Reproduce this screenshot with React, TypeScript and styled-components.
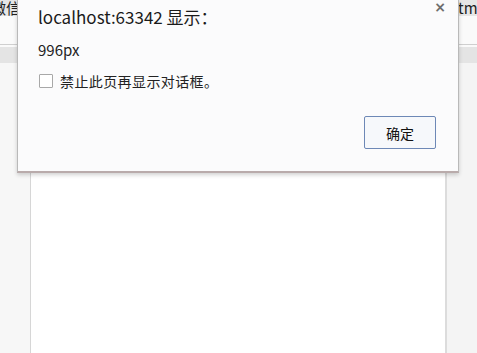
import React from "react";
import styled, { createGlobalStyle } from "styled-components";

const Global = createGlobalStyle`
  html, body { margin: 0; padding: 0; background: #f7f7f7; }
  body { font-family: "Noto Sans CJK SC", "Noto Sans", sans-serif; }
  #root { width: 477px; height: 353px; }
`;

const Page = styled.div`
  position: relative;
  width: 477px;
  height: 353px;
  overflow: hidden;
  display: flex;
  flex-direction: column;
  background: #f7f7f7;
`;

const TabBar = styled.div`
  height: 16px;
  display: flex;
  justify-content: space-between;
  align-items: center;
  background: #e6e6e6;
  font-size: 15px;
  color: #222;
  overflow: hidden;
`;

const TabText = styled.span<{ $shift: number }>`
  margin-left: ${(p) => p.$shift}px;
  line-height: 16px;
  white-space: nowrap;
`;

const WhiteRow = styled.div`
  height: 28px;
  background: #fafafa;
  border-bottom: 1px solid #cfcfcf;
`;

const Gap = styled.div`
  height: 2px;
  background: #fafafa;
`;

const GrayBand = styled.div`
  height: 16px;
  background: #e4e4e4;
`;

const Body = styled.div`
  flex: 1;
  display: flex;
`;

const Gutter = styled.div<{ $w: number; $bg: string }>`
  width: ${(p) => p.$w}px;
  background: ${(p) => p.$bg};
`;

const Panel = styled.div`
  width: 414px;
  background: #ffffff;
  border-left: 1px solid #d6d6d6;
  border-right: 2px solid #dcdcdc;
`;

const Dialog = styled.div`
  position: absolute;
  top: 0;
  left: 17px;
  width: 442px;
  height: 173px;
  box-sizing: border-box;
  background: #fbfbfc;
  border-left: 1px solid #b9b9b9;
  border-right: 1px solid #b9b9b9;
  border-bottom: 2px solid #b9abab;
  box-shadow: 0 2px 4px rgba(0, 0, 0, 0.18);
  display: flex;
  flex-direction: column;
  padding: 5px 22px 0 20px;
`;

const Close = styled.div`
  position: absolute;
  top: 0;
  right: 12px;
  font-size: 14px;
  line-height: 14px;
  color: #6e6e6e;
  font-family: "DejaVu Sans", sans-serif;
  font-weight: bold;
`;

const Title = styled.div`
  font-size: 17px;
  line-height: 24px;
  color: #1a1a1a;
`;

const Message = styled.div`
  margin-top: 12px;
  font-size: 15px;
  line-height: 18px;
  color: #222;
`;

const CheckRow = styled.label`
  margin-top: 13px;
  height: 18px;
  display: flex;
  align-items: center;
  gap: 7px;
  font-size: 14px;
  letter-spacing: 0.4px;
  color: #222;
`;

const Box = styled.span`
  width: 12px;
  height: 12px;
  margin-left: 1px;
  border: 1px solid #a8a8a8;
  background: #ffffff;
  border-radius: 1px;
`;

const Footer = styled.div`
  margin-top: 26px;
  display: flex;
  justify-content: flex-end;
`;

const Button = styled.button`
  width: 72px;
  height: 33px;
  border: 1px solid #6d88b6;
  background: #f6f8fb;
  border-radius: 2px;
  font-family: "Noto Sans CJK SC", sans-serif;
  font-size: 14px;
  color: #111;
  padding: 0;
`;

export default function App() {
  return (
    <>
      <Global />
      <Page>
        <TabBar>
          <TabText $shift={-9}>微信</TabText>
          <TabText $shift={0} style={{ width: 19 }}>tm</TabText>
        </TabBar>
        <WhiteRow />
        <Gap />
        <GrayBand />
        <Body>
          <Gutter $w={30} $bg="#f7f7f7" />
          <Panel />
          <Gutter $w={30} $bg="#f4f4f4" />
        </Body>
        <Dialog>
          <Close>×</Close>
          <Title>localhost:63342 显示：</Title>
          <Message>996px</Message>
          <CheckRow>
            <Box />
            禁止此页再显示对话框。
          </CheckRow>
          <Footer>
            <Button>确定</Button>
          </Footer>
        </Dialog>
      </Page>
    </>
  );
}
